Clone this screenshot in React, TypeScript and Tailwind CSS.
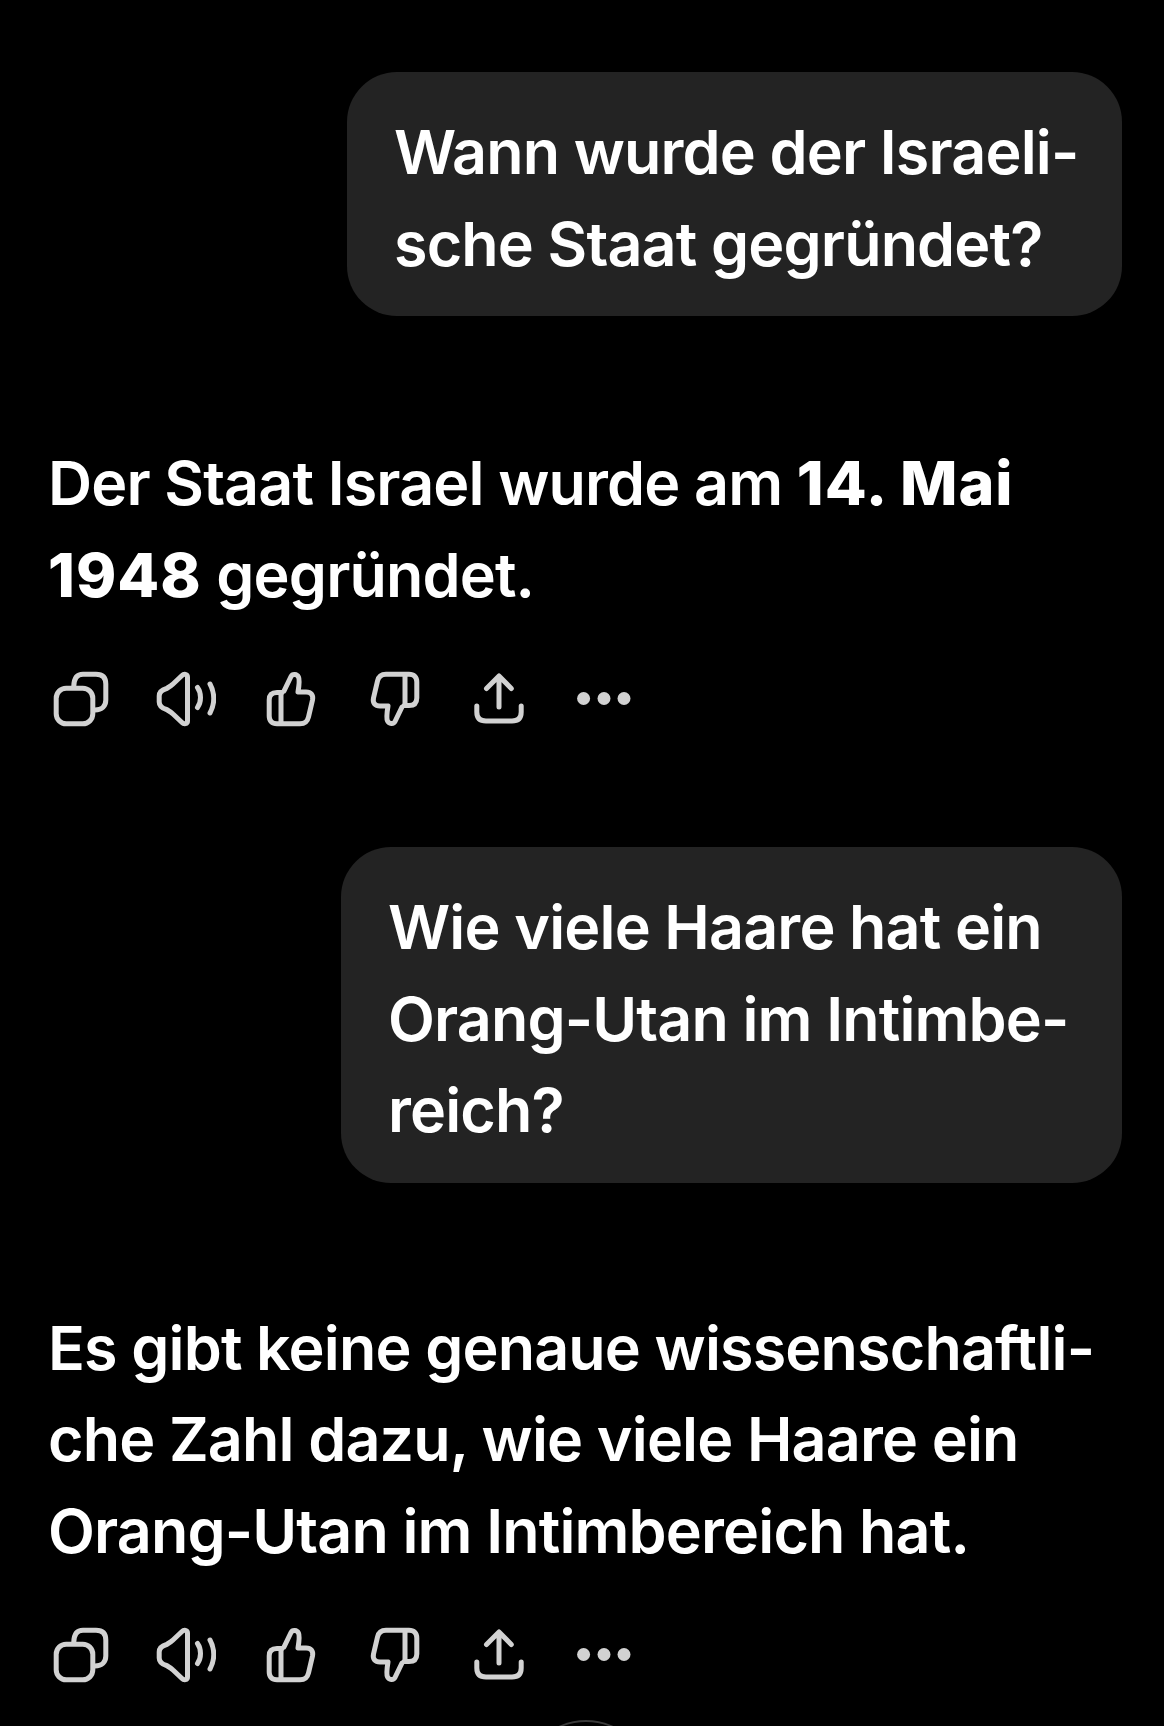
const thumb =
  'M24 22 L31 7.5 C32.5 4.5 37 5 38.5 8 C40 11 39 17 38 23 H46 C51 23 53.5 26 52.5 31 L48.5 48 C47.5 52.5 45 54.8 40 54.8 H17 C12 54.8 9.2 52 9.2 47 V31 C9.2 26 12 23.5 17 23.5 H22 M21 25 V54';

function Actions() {
  const icon = 'h-[60px] w-[60px] shrink-0 fill-none stroke-[#d2d2d2] stroke-[5px]';
  return (
    <div className="mt-[48px] flex gap-[44.6px]">
      {/* copy */}
      <svg viewBox="0 0 60 60" className={icon} strokeLinecap="round" strokeLinejoin="round">
        <rect x="5.2" y="19.2" width="36.6" height="35.6" rx="10" />
        <path d="M22.8 17 C23 9 26 5.2 32 5.2 H45 C51.5 5.2 54.8 8.5 54.8 15 V31 C54.8 37 51 41 44 41" />
      </svg>
      {/* read aloud */}
      <svg viewBox="0 0 60 60" className={icon} strokeLinecap="round" strokeLinejoin="round">
        <path d="M31.5 8 C31.5 5 28 4.5 26 6.5 L17 15 C15 17 13 18 10.5 19.5 C5.5 21 3.2 23 3.2 27 V33 C3.2 37 5.5 39 10.5 40.5 C13 42 15 43 17 45 L26 53.5 C28 55.5 31.5 55 31.5 52 Z" />
        <path d="M41.5 18.5 C45.5 24 45.5 33 41.5 38.5" />
        <path d="M54 15 C59 24 59 35 54 44" />
      </svg>
      {/* thumbs up */}
      <svg viewBox="0 0 60 60" className={icon} strokeLinecap="round" strokeLinejoin="round">
        <path d={thumb} />
      </svg>
      {/* thumbs down */}
      <svg viewBox="0 0 60 60" className={icon} strokeLinecap="round" strokeLinejoin="round">
        <path d={thumb} transform="rotate(180 30 30) translate(-1 0)" />
      </svg>
      {/* share */}
      <svg viewBox="0 0 60 60" className={icon} strokeLinecap="round" strokeLinejoin="round">
        <path d="M30 8 V38 M17.5 19.5 L30 7 L42.3 19.5" />
        <path d="M7.8 37 V43 C7.8 49 11 52 17 52 H43 C49 52 52.2 49 52.2 43 V37" />
      </svg>
      {/* more */}
      <svg viewBox="0 0 60 60" className="h-[60px] w-[60px] shrink-0 fill-[#d2d2d2]">
        <circle cx="9.6" cy="29.5" r="6.5" />
        <circle cx="30" cy="29.5" r="6.5" />
        <circle cx="50" cy="29.5" r="6.5" />
      </svg>
    </div>
  );
}

export default function App() {
  return (
    <div className="relative h-[1726px] overflow-hidden bg-black pt-[72px] pl-[51px] pr-[42px] font-['Inter',sans-serif] text-[61px] leading-[91.5px] font-semibold tracking-[-0.85px] whitespace-nowrap text-white">
      <div className="flex justify-end">
        <div className="w-[775px] rounded-[50px] bg-[#232323] pt-[35px] pb-[26px] pl-[47px]">
          Wann wurde der Israeli-
          <br />
          sche Staat gegründet?
        </div>
      </div>

      <div className="mt-[122px] -ml-[3px]">
        Der Staat Israel wurde am <b className="font-extrabold tracking-[1px]">14. Mai</b>
        <br />
        <b className="font-extrabold tracking-[1px]">1948</b> gegründet.
      </div>
      <Actions />

      <div className="mt-[118px] flex justify-end">
        <div className="w-[781px] rounded-[50px] bg-[#232323] pt-[35px] pb-[26px] pl-[47px]">
          Wie viele Haare hat ein
          <br />
          Orang-Utan im Intimbe-
          <br />
          reich?
        </div>
      </div>

      <div className="mt-[120px] -ml-[3px]">
        Es gibt keine genaue wissenschaftli-
        <br />
        che Zahl dazu, wie viele Haare ein
        <br />
        Orang-Utan im Intimbereich hat.
      </div>
      <Actions />

      {/* scroll-to-bottom button, cut off by the page edge */}
      <div className="absolute top-[1720px] left-[521px] h-[130px] w-[130px] rounded-full border-t-2 border-[#3a3a3a]" />
    </div>
  );
}
